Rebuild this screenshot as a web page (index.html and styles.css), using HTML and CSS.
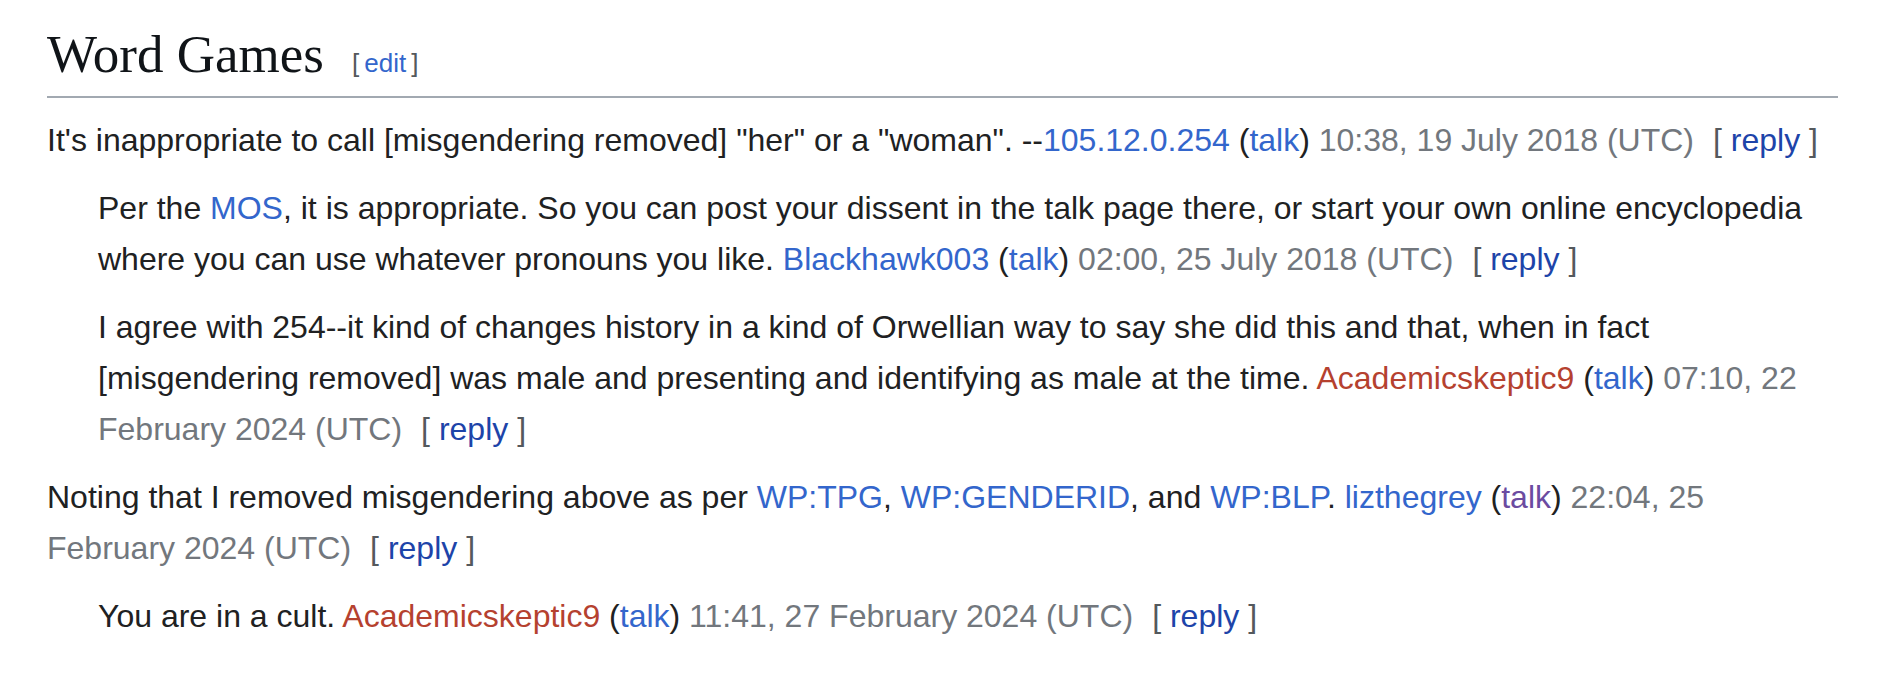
FILE: index.html
```html
<!DOCTYPE html>
<html lang="en">
<head>
  <meta charset="UTF-8">
  <title>Talk: Word Games</title>
  <link rel="stylesheet" href="styles.css">
</head>
<body>
  <main class="content">
    <h2 class="section-heading">
      <span class="headline">Word Games</span>
      <span class="editsection"><span class="bracket">[</span><a href="#">edit</a><span class="bracket">]</span></span>
    </h2>

    <!-- thread -->
    <div class="thread">
      <div class="comment">
        It's inappropriate to call [misgendering removed] "her" or a "woman". --<a href="#">105.12.0.254</a> (<a href="#">talk</a>) <span class="stamp">10:38, 19 July 2018 (UTC)</span><span class="reply"><span class="bracket">[</span> <a href="#">reply</a> <span class="bracket">]</span></span>
      </div>
      <div class="comment indent">
        Per the <a href="#">MOS</a>, it is appropriate. So you can post your dissent in the talk page there, or start your own online encyclopedia where you can use whatever pronouns you like. <a href="#">Blackhawk003</a> (<a href="#">talk</a>) <span class="stamp">02:00, 25 July 2018 (UTC)</span><span class="reply"><span class="bracket">[</span> <a href="#">reply</a> <span class="bracket">]</span></span>
      </div>
      <div class="comment indent">
        I agree with 254--it kind of changes history in a kind of Orwellian way to say she did this and that, when in fact<br>[misgendering removed] was male and presenting and identifying as male at the time. <a href="#" class="new">Academicskeptic9</a> (<a href="#">talk</a>) <span class="stamp">07:10, 22 February 2024 (UTC)</span><span class="reply"><span class="bracket">[</span> <a href="#">reply</a> <span class="bracket">]</span></span>
      </div>
      <div class="comment">
        Noting that I removed misgendering above as per <a href="#">WP:TPG</a>, <a href="#">WP:GENDERID</a>, and <a href="#">WP:BLP</a>. <a href="#">lizthegrey</a> (<a href="#" class="visited">talk</a>) <span class="stamp">22:04, 25 February 2024 (UTC)</span><span class="reply"><span class="bracket">[</span> <a href="#">reply</a> <span class="bracket">]</span></span>
      </div>
      <div class="comment indent">
        You are in a cult. <a href="#" class="new">Academicskeptic9</a> (<a href="#">talk</a>) <span class="stamp">11:41, 27 February 2024 (UTC)</span><span class="reply"><span class="bracket">[</span> <a href="#">reply</a> <span class="bracket">]</span></span>
      </div>
    </div>
  </main>
</body>
</html>
```

FILE: styles.css
```css
body {
  margin: 0;
  background: #fff;
  color: #202122;
  font-family: "Liberation Sans", Arial, sans-serif;
  font-size: 32px;
  line-height: 51px;
}
a {
  color: #3366cc;
  text-decoration: none;
}
a.new {
  color: #b5412f;
}
a.visited {
  color: #6b4ba1;
}
.content {
  padding: 0 52px 0 47px;
}
.section-heading {
  margin: 24px 0 17px;
  padding-bottom: 3px;
  border-bottom: 2px solid #a2a9b1;
  font-family: "Liberation Serif", Georgia, serif;
  font-size: 53px;
  font-weight: normal;
  line-height: 60px;
  color: #101418;
}
.editsection {
  margin-left: 10px;
  font-family: "Liberation Sans", Arial, sans-serif;
  font-size: 26px;
}
.editsection .bracket {
  margin: 0 5px;
}
.bracket {
  color: #54595d;
}
.thread {
  padding-right: 4px;
}
.comment {
  margin-bottom: 17px;
}
.comment.indent {
  margin-left: 51px;
}
.stamp {
  color: #72777d;
}
.reply {
  margin-left: 19px;
}
.reply a {
  color: #1d44a9;
}
```
